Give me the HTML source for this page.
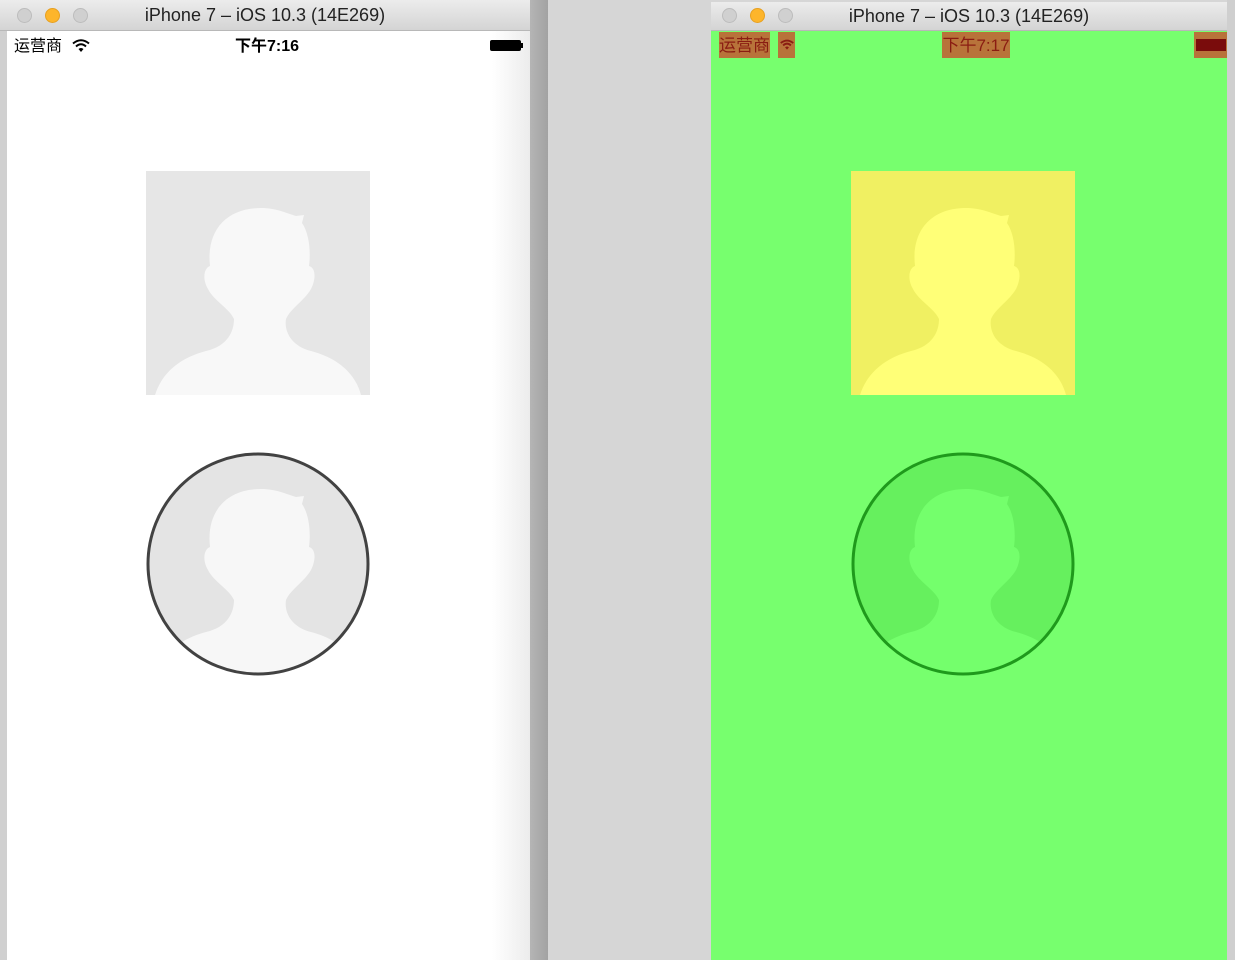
<!DOCTYPE html>
<html><head><meta charset="utf-8"><style>
*{margin:0;padding:0;box-sizing:border-box}
body{width:1235px;height:960px;position:relative;overflow:hidden;background:#d6d6d6;font-family:"Liberation Sans","Noto Sans CJK SC",sans-serif}
.abs{position:absolute}
.tb{background:linear-gradient(#ececec,#d4d4d4);border-bottom:1px solid #b8b8b8}
.tt{position:absolute;top:0;width:100%;text-align:center;font-size:18px;line-height:31px;color:#222}
.dot{position:absolute;width:15px;height:15px;border-radius:50%;top:8px;background:#d0d0d0;border:1px solid #bcbcbc}
.dot.y{background:#fdb52b;border-color:#e7a020}
.st{font-size:16px;line-height:26px;color:#000}
.br{background:#b8733a;color:#8a1c12;font-size:17px;line-height:28px;text-align:center;top:32px;height:26px;overflow:hidden}
</style></head><body>
<div class="abs" style="left:0;top:0;width:7px;height:960px;background:#d0d0d0"></div>
<div class="abs" style="left:7px;top:31px;width:523px;height:929px;background:linear-gradient(90deg,#fff 0,#fff 485px,#ececec 523px)"></div>
<div class="abs" style="left:530px;top:0;width:18px;height:960px;background:linear-gradient(90deg,#b5b5b5,#a2a2a2)"></div>
<div class="abs tb" style="left:0;top:0;width:530px;height:31px">
<div class="dot" style="left:17px"></div><div class="dot y" style="left:45px"></div><div class="dot" style="left:73px"></div>
<div class="tt" style="left:0">iPhone 7 – iOS 10.3 (14E269)</div></div>
<div class="abs st" style="left:14px;top:34px">运营商</div>
<svg class="abs" style="left:72px;top:39px" width="18" height="14" viewBox="0 0 18 14"><path d="M1 4.5 Q9 -2 17 4.5" stroke="#000" stroke-width="2" fill="none"/><path d="M4 7.5 Q9 3 14 7.5" stroke="#000" stroke-width="2" fill="none"/><path d="M6.5 10 L9 13 L11.5 10 Q9 8 6.5 10Z" fill="#000"/></svg>
<div class="abs st" style="left:235px;top:34px;font-weight:bold">下午7:16</div>
<div class="abs" style="left:490px;top:40px;width:31px;height:11px;background:#000;border-radius:2px"></div>
<div class="abs" style="left:521px;top:43px;width:2px;height:5px;background:#000"></div>

<svg class="abs" style="left:146px;top:171px" width="224" height="224" viewBox="0 0 224 224">
<rect width="224" height="224" fill="#e6e6e6"/>
<path d="M64 95 C60 60 80 37 115 37 C130 37 140 42 150 45 L158 44 L156 52 C163 62 165 80 163 95 C170 97 170 108 165 118 C158 130 145 137 140 148 C138 160 145 175 165 180 C195 188 210 205 215 224 L9 224 C15 205 30 188 60 180 C82 175 88 160 88 148 C83 137 68 130 62 118 C56 108 58 97 64 95 Z" fill="#f8f8f8"/></svg>
<svg class="abs" style="left:146px;top:452px" width="224" height="224" viewBox="0 0 224 224">
<defs><clipPath id="c1"><circle cx="112" cy="112" r="110"/></clipPath></defs>
<g clip-path="url(#c1)"><rect width="224" height="224" fill="#e4e4e4"/>
<path d="M64 95 C60 60 80 37 115 37 C130 37 140 42 150 45 L158 44 L156 52 C163 62 165 80 163 95 C170 97 170 108 165 118 C158 130 145 137 140 148 C138 160 145 175 165 180 C195 188 210 205 215 224 L9 224 C15 205 30 188 60 180 C82 175 88 160 88 148 C83 137 68 130 62 118 C56 108 58 97 64 95 Z" fill="#f7f7f7"/></g>
<circle cx="112" cy="112" r="110" fill="none" stroke="#424242" stroke-width="3"/></svg>

<div class="abs" style="left:711px;top:31px;width:516px;height:929px;background:#77ff6e"></div>
<div class="abs" style="left:1227px;top:0;width:8px;height:960px;background:#cfcfcf"></div>
<div class="abs tb" style="left:711px;top:2px;width:516px;height:29px">
<div class="dot" style="left:11px;top:6px"></div><div class="dot y" style="left:39px;top:6px"></div><div class="dot" style="left:67px;top:6px"></div>
<div class="tt" style="left:0;line-height:29px">iPhone 7 – iOS 10.3 (14E269)</div></div>
<div class="abs br" style="left:719px;width:51px">运营商</div>
<div class="abs br" style="left:778px;width:17px"><svg width="14" height="12" viewBox="0 0 18 14" style="margin-top:7px"><path d="M1 4.5 Q9 -2 17 4.5" stroke="#8a1c12" stroke-width="2.4" fill="none"/><path d="M4 7.5 Q9 3 14 7.5" stroke="#8a1c12" stroke-width="2.4" fill="none"/><path d="M6.5 10 L9 13 L11.5 10 Q9 8 6.5 10Z" fill="#8a1c12"/></svg></div>
<div class="abs br" style="left:942px;width:68px">下午7:17</div>
<div class="abs br" style="left:1194px;width:33px"><div style="margin:7px 0 0 2px;width:30px;height:12px;background:#7a0c0c"></div></div>

<svg class="abs" style="left:851px;top:171px" width="224" height="224" viewBox="0 0 224 224">
<rect width="224" height="224" fill="#f0f062"/>
<path d="M64 95 C60 60 80 37 115 37 C130 37 140 42 150 45 L158 44 L156 52 C163 62 165 80 163 95 C170 97 170 108 165 118 C158 130 145 137 140 148 C138 160 145 175 165 180 C195 188 210 205 215 224 L9 224 C15 205 30 188 60 180 C82 175 88 160 88 148 C83 137 68 130 62 118 C56 108 58 97 64 95 Z" fill="#ffff77"/></svg>
<svg class="abs" style="left:851px;top:452px" width="224" height="224" viewBox="0 0 224 224">
<defs><clipPath id="c2"><circle cx="112" cy="112" r="110"/></clipPath></defs>
<g clip-path="url(#c2)"><rect width="224" height="224" fill="#66f05e"/>
<path d="M64 95 C60 60 80 37 115 37 C130 37 140 42 150 45 L158 44 L156 52 C163 62 165 80 163 95 C170 97 170 108 165 118 C158 130 145 137 140 148 C138 160 145 175 165 180 C195 188 210 205 215 224 L9 224 C15 205 30 188 60 180 C82 175 88 160 88 148 C83 137 68 130 62 118 C56 108 58 97 64 95 Z" fill="#74ff6c"/></g>
<circle cx="112" cy="112" r="110" fill="none" stroke="#1f9a1c" stroke-width="3"/></svg>
</body></html>
